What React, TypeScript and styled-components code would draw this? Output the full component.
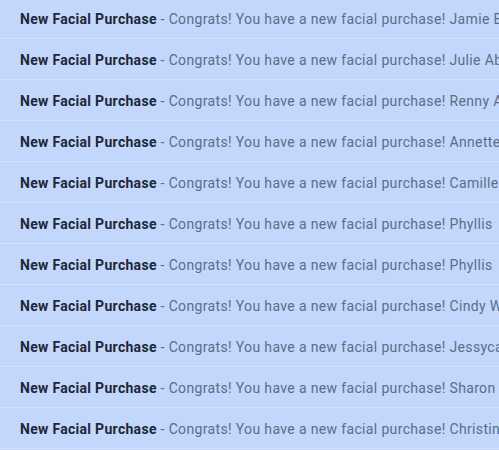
import React from 'react';
import styled, { createGlobalStyle } from 'styled-components';

const GlobalStyle = createGlobalStyle`
  html, body {
    margin: 0;
    padding: 0;
    background: #c2d7fb;
    overflow: hidden;
  }
`;

const List = styled.div`
  margin-top: -2px;
  width: 499px;
  height: 452px;
  overflow: hidden;
  background: #c2d7fb;
  font-family: Roboto, "Liberation Sans", sans-serif;
  font-size: 14px;
  letter-spacing: 0.35px;
`;

const Row = styled.div`
  height: 40px;
  display: flex;
  align-items: center;
  padding: 1px 0 0 20px;
  box-sizing: border-box;
  height: 41px;
  border-bottom: 1px solid #d3e1fa;
  white-space: nowrap;
  overflow: hidden;
`;

const Subject = styled.span`
  font-weight: 700;
  color: #202737;
  letter-spacing: 0.3px;
`;

const Snippet = styled.span`
  color: #5d6c89;
`;

const names = [
  'Jamie Bell',
  'Julie Abbott',
  'Renny Adams',
  'Annette Moore',
  'Camille Hart',
  'Phyllis',
  'Phyllis',
  'Cindy Warren',
  'Jessyca Lane',
  'Sharon',
  'Christina Lee',
];

export default function App() {
  return (
    <>
      <GlobalStyle />
      <List>
        {names.map((name, i) => (
          <Row key={i}>
            <Subject>New Facial Purchase</Subject>
            <Snippet>&nbsp;- Congrats! You have a new facial purchase! {name}</Snippet>
          </Row>
        ))}
      </List>
    </>
  );
}
